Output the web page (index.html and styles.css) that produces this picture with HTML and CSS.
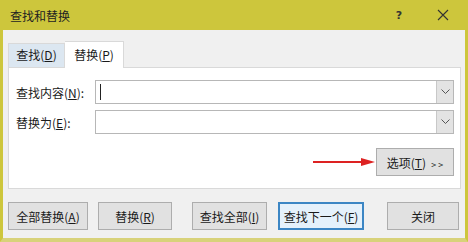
FILE: index.html
```html
<!DOCTYPE html>
<html lang="zh-CN">

<head>
    <meta charset="UTF-8">
    <meta name="viewport" content="width=device-width, initial-scale=1.0">
    <title>查找和替换</title>
    <link rel="stylesheet" href="styles.css">
</head>

<body>
    <div class="window">
        <div class="titlebar">
            <span class="title">查找和替换</span>
            <span class="help">?</span>
            <span class="close_x">
                <svg width="12" height="12" viewBox="0 0 12 12">
                    <path d="M1 1 L11 11 M11 1 L1 11" stroke="#333" stroke-width="1.1" fill="none" />
                </svg>
            </span>
        </div>
        <div class="content">
            <div class="tabs">
                <div class="tab">查找(<u>D</u>)</div>
                <div class="tab active">替换(<u>P</u>)</div>
            </div>
            <div class="panel">
                <div class="row">
                    <label class="label">查找内容(<u>N</u>):</label>
                    <div class="combo">
                        <span class="caret"></span>
                        <span class="drop">
                            <svg width="9" height="6" viewBox="0 0 9 6">
                                <path d="M0.5 0.5 L4.5 4.5 L8.5 0.5" stroke="#555" fill="none" />
                            </svg>
                        </span>
                    </div>
                </div>
                <div class="row">
                    <label class="label">替换为(<u>E</u>):</label>
                    <div class="combo">
                        <span class="drop">
                            <svg width="9" height="6" viewBox="0 0 9 6">
                                <path d="M0.5 0.5 L4.5 4.5 L8.5 0.5" stroke="#555" fill="none" />
                            </svg>
                        </span>
                    </div>
                </div>
                <div class="options_row">
                    <svg class="arrow" width="62" height="10" viewBox="0 0 62 10">
                        <path d="M0 5 H50" stroke="#d22" stroke-width="2" />
                        <path d="M48 1 L62 5 L48 9 Z" fill="#d22" />
                    </svg>
                    <button class="btn options">选项(<u>T</u>)&nbsp;&nbsp;<span class="more">&gt; &gt;</span></button>
                </div>
            </div>
            <div class="actions">
                <button class="btn w80">全部替换(<u>A</u>)</button>
                <button class="btn w74 ml10">替换(<u>R</u>)</button>
                <button class="btn w75 ml20">查找全部(<u>I</u>)</button>
                <button class="btn w86 ml11 default">查找下一个(<u>F</u>)</button>
                <button class="btn w72 ml23">关闭</button>
            </div>
        </div>
    </div>
</body>

</html>
```

FILE: styles.css
```css
* {
    box-sizing: border-box;
}

body {
    margin: 0;
    font-family: "Noto Sans CJK SC", "Liberation Sans", sans-serif;
    font-size: 12px;
    color: #1a1a1a;
}

.window {
    width: 468px;
    height: 242px;
    background-color: #f0f0f0;
    border-left: 3px solid #cdc63c;
    border-right: 3px solid #cdc63c;
    border-bottom: 4px solid #d8d27a;
    display: flex;
    flex-direction: column;
}

.titlebar {
    height: 30px;
    background-color: #cdc63c;
    margin: 0 -3px;
    padding-left: 10px;
    display: flex;
    align-items: center;
    flex-shrink: 0;
}

.title {
    font-size: 12px;
    color: #222;
}

.help {
    margin-left: auto;
    width: 12px;
    text-align: center;
    font-family: "DejaVu Sans", sans-serif;
    font-weight: bold;
    font-size: 11px;
    color: #333;
}

.close_x {
    width: 12px;
    height: 12px;
    display: flex;
    margin-left: 32px;
    margin-right: 19px;
}

.content {
    flex: 1;
    padding: 10px 4px 0 5px;
    display: flex;
    flex-direction: column;
}

.tabs {
    display: flex;
    align-items: flex-end;
    height: 27px;
}

.tab {
    width: 57px;
    height: 24px;
    line-height: 22px;
    text-align: center;
    background-color: #dce7f1;
    border: 1px solid #d9d9d9;
    border-bottom: none;
}

.tab.active {
    width: 59px;
    height: 27px;
    line-height: 25px;
    background-color: #ffffff;
    border-left: none;
    margin-bottom: -1px;
    position: relative;
}

.panel {
    height: 122px;
    background-color: #ffffff;
    border: 1px solid #d9d9d9;
    padding: 12px 6px 0 7px;
    display: flex;
    flex-direction: column;
}

.row {
    display: flex;
    align-items: center;
    height: 24px;
    margin-bottom: 6px;
}

.label {
    width: 79px;
}

.combo {
    flex: 1;
    height: 24px;
    border: 1px solid #b7b7b7;
    display: flex;
    align-items: center;
    padding-left: 4px;
}

.caret {
    width: 1px;
    height: 16px;
    background-color: #222;
}

.drop {
    margin-left: auto;
    width: 17px;
    height: 22px;
    background-color: #e3e3e3;
    border-left: 1px solid #c8c8c8;
    display: flex;
    align-items: center;
    justify-content: center;
}

.options_row {
    display: flex;
    justify-content: flex-end;
    align-items: center;
    margin-top: 8px;
}

.arrow {
    margin-right: 1px;
}

.btn {
    height: 28px;
    font-family: inherit;
    font-size: 12px;
    color: #1a1a1a;
    background-color: #e1e1e1;
    border: 1px solid #adadad;
    padding: 0;
}

.options {
    width: 78px;
}

.more {
    font-size: 9px;
    letter-spacing: 0;
}

.actions {
    display: flex;
    margin-top: 13px;
}

.default {
    background-color: #e5f1fb;
    border: 2px solid #3c86c4;
}

.w80 { width: 80px; }
.w74 { width: 74px; }
.w75 { width: 75px; }
.w86 { width: 86px; }
.w72 { width: 72px; }

.ml10 { margin-left: 10px; }
.ml20 { margin-left: 20px; }
.ml11 { margin-left: 11px; }
.ml23 { margin-left: 23px; }
```
